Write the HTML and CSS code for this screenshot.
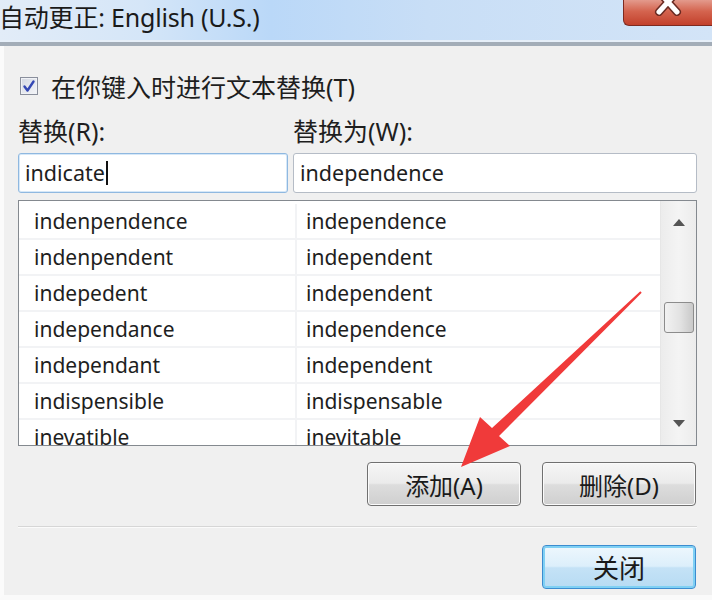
FILE: index.html
```html
<!DOCTYPE html>
<html>
<head>
<meta charset="utf-8">
<link rel="stylesheet" href="styles.css">
</head>
<body>
<div class="window">
  <div class="titlebar">
    <div class="title">自动更正: English (U.S.)</div>
    <div class="close-btn">
      <svg class="close-x" width="30" height="24" viewBox="0 0 30 24"><path d="M6 0 L24 20 M24 0 L6 20" stroke="#6a2a22" stroke-width="8" stroke-linecap="round"/><path d="M6 0 L24 20 M24 0 L6 20" stroke="#ffffff" stroke-width="5" stroke-linecap="round"/></svg>
    </div>
  </div>
  <div class="client">
    <label class="check-row">
      <span class="checkbox">
        <svg width="14" height="14" viewBox="0 0 14 14"><path d="M2.5 7.5 L5.5 11.5 L11.5 2.5" fill="none" stroke="#3448b4" stroke-width="2.4" stroke-linecap="round" stroke-linejoin="round"/></svg>
      </span>
      <span class="check-label">在你键入时进行文本替换(T)</span>
    </label>
    <div class="field-grid">
      <div class="label">替换(R):</div>
      <div class="label">替换为(W):</div>
      <div class="input focused">indicate<span class="caret"></span></div>
      <div class="input">independence</div>
    </div>
    <div class="list">
      <div class="rows">
        <div class="row"><span class="c1">indenpendence</span><span class="c2">independence</span></div>
        <div class="row"><span class="c1">indenpendent</span><span class="c2">independent</span></div>
        <div class="row"><span class="c1">indepedent</span><span class="c2">independent</span></div>
        <div class="row"><span class="c1">independance</span><span class="c2">independence</span></div>
        <div class="row"><span class="c1">independant</span><span class="c2">independent</span></div>
        <div class="row"><span class="c1">indispensible</span><span class="c2">indispensable</span></div>
        <div class="row"><span class="c1">inevatible</span><span class="c2">inevitable</span></div>
      </div>
      <div class="scrollbar">
        <svg class="arrow-up" width="12" height="7" viewBox="0 0 12 7"><path d="M0 7 L6 0 L12 7 Z" fill="#555"/></svg>
        <div class="thumb-space"><div class="thumb"></div></div>
        <svg class="arrow-down" width="12" height="7" viewBox="0 0 12 7"><path d="M0 0 L12 0 L6 7 Z" fill="#555"/></svg>
      </div>
    </div>
    <div class="btn-row">
      <button class="btn">添加(A)</button>
      <button class="btn">删除(D)</button>
    </div>
    <div class="separator"></div>
    <div class="btn-row close-row">
      <button class="btn default">关闭</button>
    </div>
  </div>
  <svg class="red-arrow" width="712" height="600" viewBox="0 0 712 600">
    <polygon points="640.3,291.3 492,428 480,417 461,467 510,446 499,436 641.7,292.7" fill="#f03a3a"/>
  </svg>
</div>
</body>
</html>
```

FILE: styles.css
```css
html, body {
  margin: 0;
  padding: 0;
}
body {
  width: 712px;
  height: 600px;
  overflow: hidden;
  background: #f0f0f0;
  font-family: "Noto Sans", "Noto Sans CJK SC", sans-serif;
  color: #1e1e1e;
}
.window {
  position: relative;
  width: 712px;
  height: 600px;
  display: flex;
  flex-direction: column;
}
.titlebar {
  height: 42px;
  flex: none;
  display: flex;
  justify-content: space-between;
  align-items: flex-start;
  background: linear-gradient(90deg, #e2ecf8 0%, #d5e6f8 20%, #bad8f8 38%, #c8def6 60%, #d3e4f7 100%);
  border-bottom: 4px solid #a3adb8;
  box-shadow: inset 0 -2px 0 #e6eff9;
}
.title {
  font-family: "Noto Sans", "Noto Sans CJK SC", sans-serif;
  font-size: 25px;
  line-height: 34px;
  margin-top: 0;
  margin-left: -1px;
  color: #1a1a1a;
  white-space: nowrap;
  letter-spacing: -0.2px;
}
.close-btn {
  width: 88px;
  height: 25px;
  border: 1px solid #7d2a20;
  border-top: none;
  border-right: none;
  border-radius: 0 0 0 6px;
  background: linear-gradient(180deg, #e39a8c 0%, #d4644f 45%, #c2402b 100%);
  display: flex;
  justify-content: center;
  align-items: flex-start;
  overflow: hidden;
}
.close-x {
  margin-top: -8px;
}
.client {
  flex: 1;
  border-left: 4px solid #fbfbfb;
  padding: 25px 15px 0 14px;
  display: flex;
  flex-direction: column;
  border-bottom: 5px solid #fafafa;
}
.check-row {
  height: 30px;
  display: flex;
  align-items: center;
  gap: 13px;
  padding-left: 2px;
}
.checkbox {
  width: 16px;
  height: 16px;
  border: 1px solid #8a8f9c;
  background: linear-gradient(135deg, #d4d8e2, #f4f5f8);
  display: flex;
  align-items: center;
  justify-content: center;
  box-shadow: inset 0 0 0 1px #f0f2f6;
}
.check-label {
  font-size: 25px;
  letter-spacing: 0;
}
.field-grid {
  margin-top: 15px;
  display: grid;
  grid-template-columns: 270px 1fr;
  column-gap: 5px;
  row-gap: 7px;
}
.label {
  font-size: 25px;
  height: 30px;
  line-height: 30px;
}
.input {
  height: 38px;
  border: 1px solid #b5bcc6;
  border-radius: 3px;
  background: #fff;
  font-size: 21.5px;
  line-height: 38px;
  padding-left: 6px;
  display: flex;
  align-items: center;
}
.input.focused {
  border-color: #8fb8e0;
  box-shadow: inset 0 0 0 1px #d6e8f8;
}
.caret {
  display: inline-block;
  width: 2px;
  height: 24px;
  background: #111;
  margin-left: 1px;
}
.list {
  margin-top: 7px;
  height: 244px;
  border: 1px solid #84898f;
  background: #fff;
  display: flex;
  overflow: hidden;
}
.rows {
  flex: 1;
  padding-top: 3px;
  display: flex;
  flex-direction: column;
}
.row {
  flex: none;
  height: 34px;
  border-bottom: 2px solid #f2f3f5;
  display: flex;
  font-size: 21px;
  line-height: 34px;
}
.c1 {
  width: 261px;
  padding-left: 15px;
  border-right: 2px solid #f2f3f5;
}
.c2 {
  padding-left: 9px;
}
.scrollbar {
  width: 35px;
  flex: none;
  background: linear-gradient(90deg, #ececec, #f4f4f4 50%, #ececec);
  border-left: 1px solid #e6e6e6;
  display: flex;
  flex-direction: column;
  align-items: center;
}
.arrow-up {
  margin-top: 18px;
}
.thumb-space {
  flex: 1;
  width: 100%;
  display: flex;
  justify-content: center;
  padding-top: 76px;
}
.thumb {
  width: 28px;
  height: 29px;
  border: 1px solid #8c8c8c;
  border-radius: 3px;
  background: linear-gradient(90deg, #f2f2f2 0%, #e2e2e2 55%, #c9c9c9 100%);
}
.arrow-down {
  margin-bottom: 18px;
}
.btn-row {
  display: flex;
  justify-content: flex-end;
  gap: 21px;
  margin-top: 16px;
  padding-right: 1px;
}
.btn {
  width: 154px;
  height: 44px;
  border: 1px solid #707070;
  border-radius: 4px;
  background: linear-gradient(180deg, #f6f6f6 0%, #ebebeb 48%, #dddddd 52%, #cfcfcf 100%);
  box-shadow: inset 0 0 0 1px #fbfbfb;
  font-family: "Noto Sans", "Noto Sans CJK SC", sans-serif;
  font-size: 24px;
  color: #1a1a1a;
  padding: 0;
}
.separator {
  margin-top: 20px;
  height: 0;
  border-top: 1px solid #d6d6d6;
  border-bottom: 1px solid #fbfbfb;
}
.close-row {
  margin-top: 17px;
}
.btn.default {
  border: 1px solid #3c8ccf;
  background: linear-gradient(180deg, #eef7fd 0%, #dceffb 48%, #c4e2f6 52%, #b7dbf3 100%);
  box-shadow: inset 0 0 0 2px #7fd0f4;
  font-size: 26px;
}
.red-arrow {
  position: absolute;
  left: 0;
  top: 0;
  pointer-events: none;
}
```
